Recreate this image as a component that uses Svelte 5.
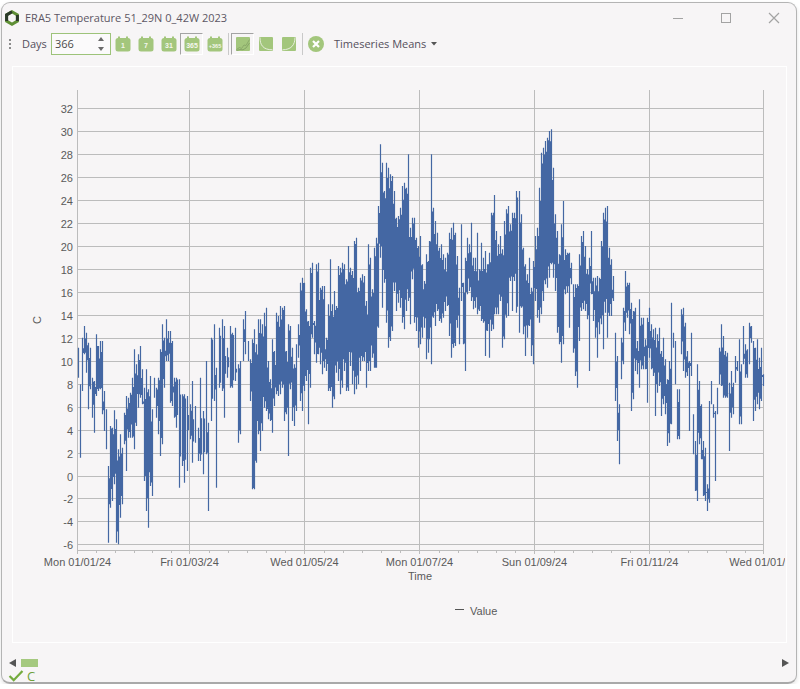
<script>
  //Window title and toolbar contents
  const title = "ERA5 Temperature 51_29N 0_42W 2023";
  const calendarIcons = [
    { label: "1", size: 7 },
    { label: "7", size: 7 },
    { label: "31", size: 7 },
    { label: "365", size: 7, active: true },
    { label: "+365", size: 5.5 },
  ];

  //Plot geometry, in the same pixels as the window
  const plotLeft = 77;
  const plotRight = 764;
  const plotTop = 89;
  const plotBottom = 549;

  const yValues = [];
  for (let v = 32; v >= -6; v -= 2) yValues.push(v);
  const yFor = (v) => Math.round(107.3 + (32 - v) * 11.475) + 0.5;

  const xMajor = [
    { x: 77.5, label: "Mon 01/01/24" },
    { x: 189.5, label: "Fri 01/03/24" },
    { x: 304.5, label: "Wed 01/05/24" },
    { x: 419.5, label: "Mon 01/07/24" },
    { x: 534.5, label: "Sun 01/09/24" },
    { x: 649.5, label: "Fri 01/11/24" },
    { x: 763.5, label: "Wed 01/01/24" },
  ];

  //Half-month minor ticks between the labelled ones
  const xMinor = [];
  for (let i = 0; i < xMajor.length - 1; i++) {
    const step = (xMajor[i + 1].x - xMajor[i].x) / 6;
    for (let j = 1; j < 6; j++) xMinor.push(Math.round(xMajor[i].x + step * j) + 0.5);
  }

  //Hourly temperature range per column: x, highest y, lowest y
  const ranges = [
    [75, 290, [10,170,260, 16,280,500, 22,140,300, 28,105,190, 34,125,245, 38,155,355, 44,170,295, 50,260,380, 56,270,425, 62,130,315, 68,165,300, 74,150,295, 82,150,370, 88,300,420, 94,355,475, 100,525,755, 106,405,650, 112,410,630, 118,358,580, 124,385,755, 130,475,760, 136,430,680, 142,470,640, 148,365,460, 154,315,540, 160,320,440, 166,305,440, 172,260,440, 178,175,475, 184,220,405, 190,190,350, 196,165,320, 202,235,340, 208,290,570, 214,235,660, 220,295,710, 226,255,585, 232,355,615, 238,260,320, 244,290,380, 250,260,430, 256,175,495, 262,100,460, 268,140,290, 274,85,210, 280,120,210, 286,120,335, 292,150,345, 298,260,380, 304,260,410, 312,265,590, 320,310,525, 328,310,575, 336,315,540, 344,340,445, 352,270,515, 360,345,455, 368,410,510, 376,260,510, 384,360,550, 392,210,490, 400,395,660, 408,140,390, 416,100,330, 424,230,590, 432,110,290, 440,85,300, 448,105,380, 456,170,260, 464,105,290, 472,125,290, 480,110,270, 488,220,455, 496,210,430, 504,85,210, 510,60,190, 518,150,210, 526,205,330, 532,145,595]],
    [250, 130, [12,595,1075, 18,640,995, 24,565,910, 30,565,960, 36,580,900, 42,545,830, 48,530,840, 54,690,865, 60,745,870, 66,625,905, 72,660,825, 78,545,790, 84,555,795, 90,525,790, 96,530,770, 102,525,870, 108,660,850, 114,580,975, 120,585,775, 126,650,870, 132,700,885, 138,640,840, 144,580,680, 150,455,810, 156,440,840, 162,455,780, 168,535,750, 174,570,880, 180,410,770, 186,395,620, 192,570,670, 198,400,695, 204,395,670, 210,470,700, 216,465,730, 222,465,710, 228,620,720, 234,520,780, 240,385,780, 246,520,830, 252,480,805, 258,525,725, 264,405,750, 270,410,790, 276,395,770, 282,400,720, 288,445,780, 294,345,780, 300,410,705, 306,420,760, 312,330,790, 318,320,775, 324,470,760, 330,440,720, 336,430,690, 342,435,690, 348,510,770, 354,340,720, 360,380,720, 366,475,680, 372,350,710, 378,320,710, 384,225,590, 390,40,380, 396,95,530, 402,180,455, 408,95,575, 414,110,650, 420,130,630, 426,135,600, 432,180,480, 438,260,540, 444,255,515, 450,230,530, 456,165,575, 462,155,595, 468,170,540, 474,70,510, 480,290,580, 486,260,445, 492,260,575, 498,320,600, 504,345,650, 510,315,640, 516,400,620, 522,450,590, 528,370,685, 534,390,665, 538,330,625]],
    [425, 120, [18,100,730, 24,260,590, 30,300,615, 36,335,570, 42,380,600, 48,370,605, 54,400,590, 60,410,570, 66,395,555, 72,335,645, 78,320,710, 84,305,680, 90,335,675, 96,405,620, 102,500,670, 108,310,540, 114,485,670, 120,410,750, 126,350,520, 132,370,510, 138,305,540, 144,410,565, 150,410,560, 156,335,580, 162,445,570, 168,365,600, 174,410,605, 180,390,705, 186,430,630, 192,395,710, 198,275,630, 204,275,625, 208,222,580, 214,330,580, 220,370,580, 226,345,540, 232,385,680, 238,300,655, 244,265,590, 250,255,585, 256,310,480, 262,275,570, 268,275,480, 274,210,575, 282,210,635, 288,280,560, 294,380,640, 300,430,705, 306,460,650, 312,410,615, 318,500,705, 324,420,730, 330,345,540, 336,320,590, 342,200,605, 348,95,580, 354,80,540, 360,60,490, 366,50,500, 372,30,470, 378,25,430, 384,140,470, 390,280,510, 396,330,635, 402,400,670, 408,310,725, 414,240,670, 420,385,520, 426,395,515, 432,395,620, 438,425,490, 444,490,695, 450,490,765, 456,490,800, 462,400,660, 468,345,570, 474,330,565, 480,375,570, 486,445,595, 492,410,750, 498,330,520, 504,470,600, 510,470,650, 516,465,710, 522,470,640]],
    [600, 200, [4,120,370, 10,35,445, 16,20,335, 22,15,410, 28,140,345, 34,175,345, 40,225,300, 46,395,600, 52,465,720, 58,610,790, 62,410,535, 68,320,490, 74,210,390, 80,245,350, 86,245,400, 92,305,630, 98,330,595, 104,320,510, 110,420,520, 116,295,560, 122,350,505, 128,350,505, 134,415,505, 140,350,605, 146,320,470, 152,370,505, 158,385,525, 164,380,645, 170,400,575, 176,380,555, 182,450,645, 188,410,610, 194,475,640, 200,535,735, 206,480,725, 212,305,670, 218,395,440, 224,420,550, 230,565,715, 236,565,715, 242,325,460, 248,320,510, 254,365,530, 260,450,525, 266,480,690, 274,395,525, 280,640,760, 286,720,870, 292,490,900, 298,540,730, 304,610,775, 310,720,885, 316,740,900, 322,850,930, 328,600,905, 334,540,610, 340,610,650, 346,630,840, 352,560,640, 358,440,550, 364,370,555, 370,405,590, 376,450,590, 382,455,590, 388,545,750, 394,510,650, 400,545,640, 406,465,545, 412,480,510, 418,415,670, 424,490,670, 430,375,490, 436,430,530, 442,445,530, 448,365,490, 454,375,425, 460,420,660, 466,440,630, 472,415,610, 478,470,625, 484,440,600, 490,520,555]],
  ];

  //Small seeded generator so the series is the same on every load
  let seed = 20240101;
  const rnd = () => {
    seed = (seed * 1664525 + 1013904223) % 4294967296;
    return seed / 4294967296;
  };

  let buildSeries = () => {
    const columns = [];
    for (const [x0, y0, flat] of ranges) {
      for (let i = 0; i < flat.length; i += 3) {
        //Snap to the pixel grid so the thin spikes stay sharp
        columns.push({ x: Math.round(x0 + flat[i] / 3) + 0.5, top: y0 + flat[i + 1] / 3, bottom: y0 + flat[i + 2] / 3 });
      }
    }
    let d = "";
    columns.forEach((c, i) => {
      d += `M${c.x} ${c.top.toFixed(1)}V${c.bottom.toFixed(1)}`;
      const next = columns[i + 1];
      if (!next) return;
      //Column in between the two measured ones, a little shorter than its neighbours
      const top = Math.max(c.top, next.top) + rnd() * 14;
      const bottom = Math.min(c.bottom, next.bottom) - rnd() * 14;
      if (bottom > top) d += `M${c.x + 1} ${top.toFixed(1)}V${bottom.toFixed(1)}`;
    });
    return d;
  };

  const seriesPath = buildSeries();
</script>

<div class="window">
  <!-- Title bar -->
  <div class="titlebar">
    <svg class="logo" width="16" height="16" viewBox="0 0 16 16">
      <polygon points="8,1.8 13.4,4.9 13.4,11.1 8,14.2 2.6,11.1 2.6,4.9" fill="none" stroke="#5f8f35" stroke-width="3" />
      <polyline points="2.6,11.1 2.6,4.9 8,1.8" fill="none" stroke="#2c3a2a" stroke-width="3" />
      <polyline points="13.4,4.9 13.4,11.1" fill="none" stroke="#2c3a2a" stroke-width="3" />
    </svg>
    <span class="title">{title}</span>
    <div class="window-buttons">
      <span class="window-button">
        <svg width="12" height="12" viewBox="0 0 12 12"><path d="M1 6.5H11" stroke="#a3a3a3" fill="none" /></svg>
      </span>
      <span class="window-button">
        <svg width="12" height="12" viewBox="0 0 12 12"><rect x="1.5" y="1.5" width="9" height="9" stroke="#a3a3a3" fill="none" /></svg>
      </span>
      <span class="window-button">
        <svg width="12" height="12" viewBox="0 0 12 12"><path d="M1 1L11 11M11 1L1 11" stroke="#a3a3a3" stroke-width="1.2" fill="none" /></svg>
      </span>
    </div>
  </div>

  <!-- Toolbar -->
  <div class="toolbar">
    <span class="grip"><i></i><i></i><i></i></span>
    <span class="days-label">Days</span>
    <div class="spin">
      <span class="spin-value">366</span>
      <span class="spin-arrows">
        <svg width="8" height="16" viewBox="0 0 8 16">
          <path d="M4 1L7 5H1Z" fill="#6a6a6a" />
          <path d="M4 15L1 11H7Z" fill="#6a6a6a" />
        </svg>
      </span>
    </div>

    <div class="icon-group">
      {#each calendarIcons as icon}
        <span class={icon.active ? "tool-button active" : "tool-button"}>
          <svg width="16" height="16" viewBox="0 0 16 16">
            <rect x="0.5" y="2" width="15" height="13.5" rx="2.5" fill="#a3c67c" />
            <rect x="3" y="0.5" width="2" height="3" fill="#a3c67c" />
            <rect x="11" y="0.5" width="2" height="3" fill="#a3c67c" />
            <text x="8" y="12.2" text-anchor="middle" class="calendar-text" font-size={icon.size}>{icon.label}</text>
          </svg>
        </span>
      {/each}
    </div>

    <span class="separator"></span>

    <div class="icon-group trend">
      <span class="tool-button active">
        <svg width="14" height="14" viewBox="0 0 14 14">
          <rect width="14" height="14" rx="1" fill="#a3c67c" />
          <path d="M0.5 12.5L3.5 10.5L5.5 11.5L8 8L10 8.5L13.5 2.5" fill="none" stroke="#8aa96a" stroke-width="1" />
          <path d="M0.5 13.5L4 12.5L7 12.8L10 11L13.5 6" fill="none" stroke="#7f9d62" stroke-width="0.8" />
        </svg>
      </span>
      <span class="tool-button">
        <svg width="14" height="14" viewBox="0 0 14 14">
          <rect width="14" height="14" rx="1" fill="#a3c67c" />
          <path d="M1 0.5C1 8 4 12.8 13.5 12.8" fill="none" stroke="#eef3e6" stroke-width="0.9" />
        </svg>
      </span>
      <span class="tool-button">
        <svg width="14" height="14" viewBox="0 0 14 14">
          <rect width="14" height="14" rx="1" fill="#a3c67c" />
          <path d="M0.5 12.8C9 12.8 13 8 13 0.5" fill="none" stroke="#eef3e6" stroke-width="0.9" />
        </svg>
      </span>
    </div>

    <span class="separator second"></span>

    <svg class="clear-icon" width="16" height="16" viewBox="0 0 16 16">
      <circle cx="8" cy="8" r="8" fill="#a3c67c" />
      <path d="M5 5L11 11M11 5L5 11" stroke="#fff" stroke-width="2.2" fill="none" />
    </svg>

    <span class="menu-label">Timeseries Means</span>
    <svg class="caret" width="6" height="4" viewBox="0 0 6 4"><path d="M0 0H6L3 3.5Z" fill="#555" /></svg>
  </div>

  <!-- Chart panel -->
  <div class="panel">
    <svg class="chart" width="772" height="575" viewBox="13 66 772 575">
      <!-- Grid -->
      {#each yValues as v}
        <line x1={plotLeft} x2={plotRight} y1={yFor(v)} y2={yFor(v)} class="grid" />
        <text x="73" y={yFor(v) + 4} text-anchor="end" class="tick">{v}</text>
      {/each}
      {#each xMajor as t}
        <line x1={t.x} x2={t.x} y1={plotTop} y2={plotBottom + 4} class="grid" />
        <text x={t.x} y="565" text-anchor="middle" class="tick">{t.label}</text>
      {/each}
      {#each xMinor as x}
        <line x1={x} x2={x} y1={plotBottom} y2={plotBottom + 3} class="grid" />
      {/each}
      <line x1={plotLeft} x2={plotRight} y1={plotBottom + 0.5} y2={plotBottom + 0.5} class="grid" />

      <!-- Series -->
      <path d={seriesPath} class="series" />

      <!-- Axis titles and legend -->
      <text x="420" y="579" text-anchor="middle" class="tick">Time</text>
      <text transform="translate(41 319) rotate(-90)" text-anchor="middle" class="tick">C</text>
      <line x1="455" x2="464" y1="608.5" y2="608.5" class="legend-line" />
      <text x="470" y="614" class="tick">Value</text>
    </svg>
  </div>

  <!-- Range slider -->
  <div class="scroll-row">
    <svg width="8" height="8" viewBox="0 0 8 8"><path d="M0 4L7 0V8Z" fill="#555" /></svg>
    <span class="thumb"></span>
    <span class="scroll-spacer"></span>
    <svg width="8" height="8" viewBox="0 0 8 8"><path d="M7 4L0 0V8Z" fill="#555" /></svg>
  </div>

  <!-- Series legend at the bottom -->
  <div class="status-row">
    <svg width="16" height="12" viewBox="0 0 16 13">
      <path d="M1 6.5L5.5 11L15 1" fill="none" stroke="#74ab3e" stroke-width="2.4" />
    </svg>
    <span class="status-label">C</span>
  </div>
</div>

<style>
  :global(body) {
    background: #ffffff;
  }

  .window {
    box-sizing: border-box;
    width: 796px;
    height: 682px;
    margin: 2px 0 0 1px;
    display: flex;
    flex-direction: column;
    background: #f7f5f6;
    border: 1px solid #b4b4b4;
    border-bottom: 2px solid #a9a9a9;
    border-radius: 9px;
    box-shadow: 0 2px 4px rgba(0, 0, 0, 0.12);
    font-family: "Open Sans", "Noto Sans", sans-serif;
    overflow: hidden;
  }

  .titlebar {
    height: 28px;
    flex: none;
    display: flex;
    align-items: center;
    padding-left: 2px;
    padding-top: 1px;
    box-sizing: border-box;
  }

  .logo {
    margin-right: 5px;
  }

  .title {
    font-size: 11px;
    color: #5d5764;
    white-space: nowrap;
  }

  .window-buttons {
    margin-left: auto;
    margin-right: 5px;
    display: flex;
    gap: 14px;
  }

  .window-button {
    width: 34px;
    display: flex;
    justify-content: center;
  }

  .toolbar {
    height: 35px;
    flex: none;
    box-sizing: border-box;
    padding: 0 0 10px 7px;
    display: flex;
    align-items: center;
    font-size: 11px;
    color: #55505c;
  }

  .grip {
    display: flex;
    flex-direction: column;
    gap: 2px;
    width: 2px;
  }

  .grip i {
    display: block;
    width: 2px;
    height: 2px;
    background: #8c8c8c;
  }

  .days-label {
    margin-left: 11px;
    width: 24px;
  }

  .spin {
    box-sizing: border-box;
    width: 60px;
    height: 22px;
    margin-left: 5px;
    padding: 0 5px 0 3px;
    display: flex;
    align-items: center;
    justify-content: space-between;
    background: #fbfafb;
    border: 1px solid #9dc37a;
  }

  .spin-value {
    color: #4a4a4a;
  }

  .spin-arrows {
    display: flex;
  }

  .icon-group {
    display: flex;
    align-items: center;
  }

  .tool-button {
    box-sizing: border-box;
    width: 23px;
    height: 22px;
    display: flex;
    align-items: center;
    justify-content: center;
    border: 1px solid transparent;
  }

  .tool-button.active {
    border-color: #a3a3a3 #ffffff #ffffff #a3a3a3;
  }

  .calendar-text {
    font-family: "Liberation Sans", sans-serif;
    font-weight: bold;
    fill: #f4f6ee;
  }

  .separator {
    width: 1px;
    height: 22px;
    margin-left: 2px;
    background: #c9c9c9;
  }

  .icon-group.trend {
    margin-left: 2px;
  }

  .clear-icon {
    margin-left: 5px;
  }

  .menu-label {
    margin-left: 10px;
  }

  .caret {
    margin-left: 5px;
  }

  .panel {
    box-sizing: border-box;
    flex: none;
    height: 577px;
    margin: 0 9px 0 10px;
    border: 1px solid #ffffff;
  }

  .chart {
    display: block;
    overflow: hidden;
  }

  .grid {
    stroke: #bcbcbc;
    stroke-width: 1;
  }

  .tick {
    font-family: "Liberation Sans", Arial, sans-serif;
    font-size: 11px;
    fill: #5a5a5a;
  }

  .series {
    fill: none;
    stroke: #4467a3;
    stroke-width: 1.2;
  }

  .legend-line {
    stroke: #555;
    stroke-width: 1;
  }

  .scroll-row {
    flex: none;
    height: 12px;
    margin-top: 14px;
    padding: 0 6px 0 7px;
    display: flex;
    align-items: center;
  }

  .thumb {
    width: 17px;
    height: 8px;
    margin-left: 4px;
    background: #a5c97f;
  }

  .scroll-spacer {
    flex: 1;
  }

  .status-row {
    flex: none;
    display: flex;
    align-items: center;
    height: 12px;
    padding-left: 6px;
    margin-top: 1px;
  }

  .status-label {
    margin-left: 3px;
    font-size: 13px;
    line-height: 12px;
    color: #6ea03a;
  }
</style>
